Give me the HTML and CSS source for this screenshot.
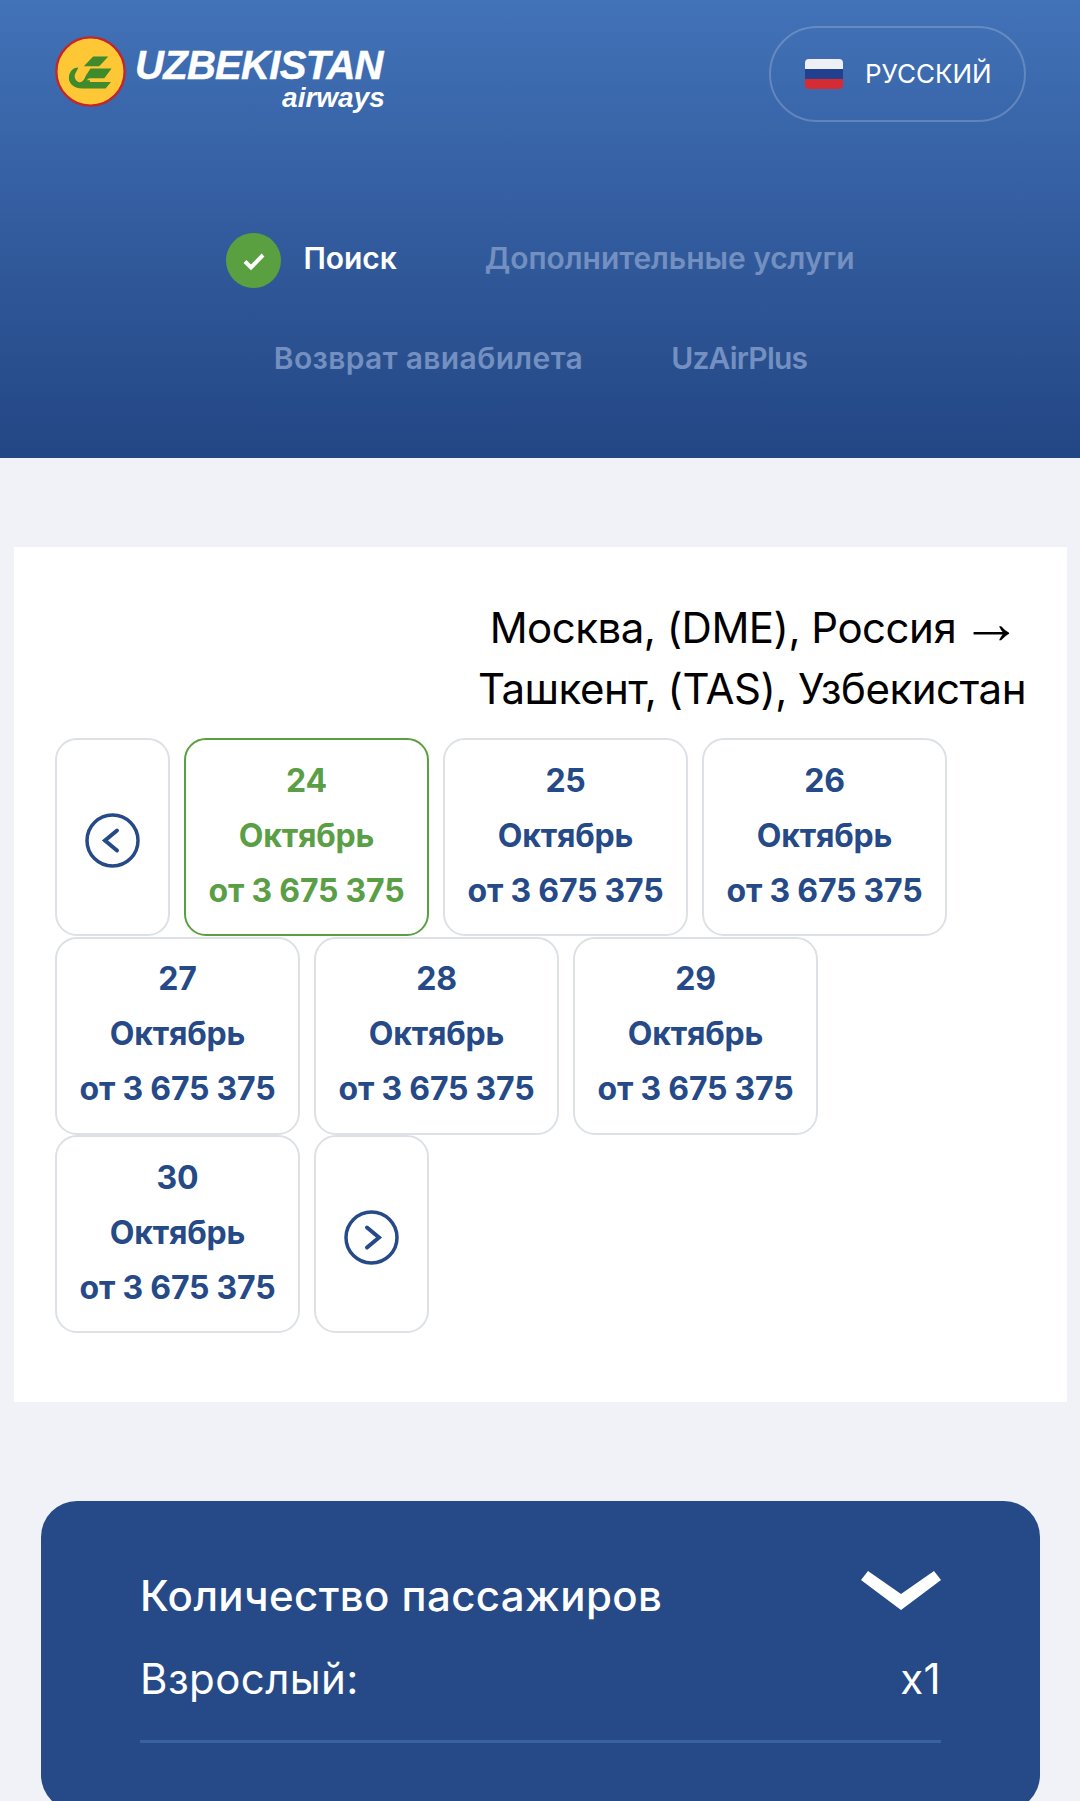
FILE: index.html
```html
<!DOCTYPE html>
<html lang="ru">
<head>
    <meta charset="UTF-8">
    <meta name="viewport" content="width=device-width, initial-scale=1.0">
    <title>Uzbekistan Airways</title>
    <link rel="stylesheet" href="styles.css">
</head>
<body>
    <header class="site-header">
        <div class="top-bar">
            <a class="logo" href="#">
                <svg class="logo-mark" viewBox="46 46 212 212" aria-hidden="true">
                    <circle cx="152" cy="152" r="102" fill="#fdc735" stroke="#c4252a" stroke-width="7"/>
                    <path fill="#3f8a2c" d="M160 107H205L178 136H132ZM152 143H215L193 172H148L140 178H150ZM150 183H213L197 203H128C100 203 84 186 88 165C91 150 101 140 116 140L108 156C102 164 104 180 118 184C127 186 134 176 138 165L152 143Z"/>
                </svg>
                <span class="logo-text">
                    <span class="logo-name">UZBEKISTAN</span>
                    <span class="logo-sub">airways</span>
                </span>
            </a>
            <button class="lang-btn" type="button">
                <span class="flag"><i class="flag-white"></i><i class="flag-blue"></i><i class="flag-red"></i></span>
                <span class="lang-label">РУССКИЙ</span>
            </button>
        </div>
        <nav class="steps">
            <a class="step step-active" href="#">
                <span class="step-check">
                    <svg viewBox="0 0 24 24" width="24" height="24" aria-hidden="true"><path d="M3 12.5l6 6L21 6" fill="none" stroke="#fff" stroke-width="4"/></svg>
                </span>
                Поиск
            </a>
            <a class="step" href="#">Дополнительные услуги</a>
            <a class="step step-refund" href="#">Возврат авиабилета</a>
            <a class="step step-plus" href="#">UzAirPlus</a>
        </nav>
    </header>

    <main>
        <section class="flights">
            <h2 class="route">Москва, (DME), Россия <span class="route-arrow">→</span> Ташкент, (TAS), Узбекистан</h2>
            <div class="dates">
                <a class="chip chip-arrow" href="#">
                    <svg viewBox="0 0 55 55" width="55" height="55" aria-hidden="true"><circle cx="27.5" cy="27.5" r="25.5" fill="none" stroke="#254a87" stroke-width="3.5"/><path d="M32 17.5L20 27.5L32 37.5" fill="none" stroke="#254a87" stroke-width="4" stroke-linecap="round"/></svg>
                </a>
                <a class="chip chip-active" href="#"><span>24</span><span>Октябрь</span><span>от 3 675 375</span></a>
                <a class="chip" href="#"><span>25</span><span>Октябрь</span><span>от 3 675 375</span></a>
                <a class="chip" href="#"><span>26</span><span>Октябрь</span><span>от 3 675 375</span></a>
                <a class="chip" href="#"><span>27</span><span>Октябрь</span><span>от 3 675 375</span></a>
                <a class="chip" href="#"><span>28</span><span>Октябрь</span><span>от 3 675 375</span></a>
                <a class="chip" href="#"><span>29</span><span>Октябрь</span><span>от 3 675 375</span></a>
                <a class="chip" href="#"><span>30</span><span>Октябрь</span><span>от 3 675 375</span></a>
                <a class="chip chip-arrow" href="#">
                    <svg viewBox="0 0 55 55" width="55" height="55" aria-hidden="true"><circle cx="27.5" cy="27.5" r="25.5" fill="none" stroke="#254a87" stroke-width="3.5"/><path d="M23 17.5L35 27.5L23 37.5" fill="none" stroke="#254a87" stroke-width="4" stroke-linecap="round"/></svg>
                </a>
            </div>
        </section>

        <section class="passengers">
            <div class="passengers-head">
                <h3>Количество пассажиров</h3>
                <svg class="chevron" viewBox="0 0 80 39" aria-hidden="true"><path d="M0 9L7 0L40 23L73 0L80 9L40 39Z" fill="#fff"/></svg>
            </div>
            <div class="passengers-row">
                <span>Взрослый:</span>
                <span>x1</span>
            </div>
        </section>
    </main>
</body>
</html>
```

FILE: styles.css
```css
html, body {
    height: 100%;
    overflow: hidden;
}

body {
    margin: 0;
    padding: 0;
    background-color: #f0f2f7;
    font-family: Inter, "Noto Sans", sans-serif;
}

a {
    color: inherit;
    text-decoration: none;
}

.site-header {
    height: 458px;
    box-sizing: border-box;
    padding: 26px 54px 0 55px;
    background: linear-gradient(180deg, #4272b8 0%, #234684 100%);
}

.top-bar {
    display: flex;
    justify-content: space-between;
    align-items: flex-start;
}

.logo {
    display: flex;
    margin-top: 10px;
    color: #fff;
}

.logo-mark {
    width: 71px;
    height: 71px;
}

.logo-text {
    display: flex;
    flex-direction: column;
    align-items: flex-end;
    margin-left: 9px;
    font-family: "Liberation Sans", Arial, sans-serif;
    font-style: italic;
    font-weight: 700;
}

.logo-name {
    margin-top: 10px;
    font-size: 40px;
    line-height: 38px;
    letter-spacing: -0.7px;
    -webkit-text-stroke: 0.5px #fff;
}

.logo-sub {
    margin-top: 2px;
    margin-right: -2px;
    font-size: 28px;
    line-height: 24px;
}

.lang-btn {
    display: flex;
    align-items: center;
    width: 257px;
    height: 96px;
    box-sizing: border-box;
    padding: 0 0 0 34px;
    background: none;
    border: 2px solid rgba(255, 255, 255, 0.2);
    border-radius: 48px;
    color: #fff;
    font-family: inherit;
    font-size: 26px;
}

.lang-label {
    margin-bottom: 2px;
}

.flag {
    display: flex;
    flex-direction: column;
    width: 38px;
    height: 30px;
    margin-right: 22px;
    border-radius: 4px;
    overflow: hidden;
}

.flag i {
    flex: 1;
}

.flag-white { background: #eef0f5; }
.flag-blue { background: #22408f; }
.flag-red { background: #d52b32; }

.steps {
    display: flex;
    flex-wrap: wrap;
    justify-content: center;
    align-items: flex-start;
    column-gap: 88px;
    row-gap: 45px;
    margin-top: 111px;
    color: #7390c0;
    font-size: 30px;
    font-weight: 600;
    line-height: 50px;
    letter-spacing: -0.05px;
}

.step-active {
    display: flex;
    color: #fff;
}

.step-refund {
    letter-spacing: 0.35px;
}

.step-plus {
    letter-spacing: -0.8px;
}

.step-check {
    display: flex;
    justify-content: center;
    align-items: center;
    width: 55px;
    height: 55px;
    margin-right: 22px;
    border-radius: 50%;
    background: #5aa040;
}

.flights {
    margin: 89px 13px 0 14px;
    padding: 50px 41px 69px;
    background: #fff;
}

.route {
    margin: 0 0 19px 300px;
    color: #000;
    font-size: 42px;
    font-weight: 400;
    line-height: 61px;
    letter-spacing: -0.5px;
    text-align: right;
}

.route-arrow {
    margin: 0 5px 0 -6px;
    font-family: "Liberation Sans", Arial, sans-serif;
    font-size: 60px;
    line-height: 0;
}

.dates {
    display: flex;
    flex-wrap: wrap;
    gap: 0.5px 14px;
}

.chip {
    display: flex;
    flex-direction: column;
    align-items: center;
    width: 245px;
    height: 198px;
    box-sizing: border-box;
    padding-top: 12.6px;
    border: 2px solid #dde1e5;
    border-radius: 22px;
    color: #254a87;
    font-size: 32px;
    font-weight: 700;
    line-height: 55px;
    letter-spacing: -0.2px;
}

.chip-active {
    border-color: #5aa040;
    color: #5a9e45;
}

.chip-arrow {
    justify-content: center;
    width: 115px;
    padding-top: 6px;
}

.passengers {
    height: 310px;
    box-sizing: border-box;
    margin: 99px 40px 0 41px;
    padding: 70px 99px 0;
    border-radius: 36px;
    background: #254a87;
    color: #fff;
}

.passengers-head {
    display: flex;
    justify-content: space-between;
    height: 50px;
}

.passengers-head h3 {
    margin: 0;
    font-size: 42px;
    font-weight: 500;
    line-height: 50px;
    letter-spacing: 0.4px;
}

.chevron {
    width: 80px;
    height: 39px;
}

.passengers-row {
    display: flex;
    justify-content: space-between;
    margin-top: 33px;
    padding-bottom: 36px;
    border-bottom: 3px solid #3a629f;
    font-size: 42px;
    line-height: 50px;
    letter-spacing: 0.4px;
}
```
